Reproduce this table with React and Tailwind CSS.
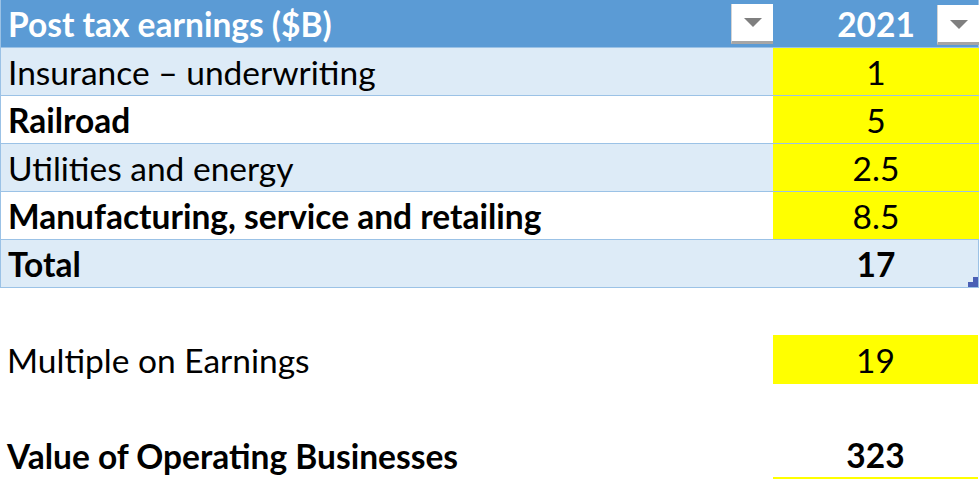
const rows = [
  { label: 'Insurance – underwriting', value: '1', bold: false, shade: true },
  { label: 'Railroad', value: '5', bold: true, shade: false },
  { label: 'Utilities and energy', value: '2.5', bold: false, shade: true },
  { label: 'Manufacturing, service and retailing', value: '8.5', bold: true, shade: false },
];

function FilterButton() {
  return (
    <div className="w-[42px] h-[40px] bg-white border-l border-[#d4d4d4] border-b-[3px] border-b-[#a6a6a6] flex items-center justify-center">
      <svg width="20" height="12" viewBox="0 0 20 12">
        <path d="M1 2h18l-9 9z" fill="#7f7f7f" />
      </svg>
    </div>
  );
}

export default function App() {
  return (
    <div className="w-[980px] h-[482px] bg-white text-black text-[33.5px] leading-none" style={{ fontFamily: 'Lato, "Open Sans", sans-serif' }}>
      <div className="w-[979px] border-l border-r border-b border-[#9bc2e6]">
        {/* header */}
        <div className="grid grid-cols-[772px_206px] h-[48px] bg-[#5b9bd5] text-white font-bold border-b border-[#9bc2e6]">
          <div className="flex items-center justify-between pl-[7px]">
            <span className="pt-[2px]">Post tax earnings ($B)</span>
            <FilterButton />
          </div>
          <div className="relative flex items-center justify-center">
            <span className="pt-[2px]">2021</span>
            <div className="absolute right-0 top-[5px]">
              <FilterButton />
            </div>
          </div>
        </div>

        {rows.map((r) => (
          <div key={r.label} className={`grid grid-cols-[772px_206px] h-[48px] border-b border-[#9bc2e6] ${r.shade ? 'bg-[#ddebf7]' : 'bg-white'} ${r.bold ? 'font-bold' : ''}`}>
            <div className="flex items-center pl-[7px] pt-[3px]">{r.label}</div>
            <div className="flex items-center justify-center bg-[#ffff00] font-normal pt-[3px]">{r.value}</div>
          </div>
        ))}

        {/* total */}
        <div className="relative grid grid-cols-[772px_206px] h-[47px] bg-[#ddebf7] font-bold">
          <div className="flex items-center pl-[7px] pt-[3px]">Total</div>
          <div className="flex items-center justify-center pt-[3px]">17</div>
          <svg className="absolute right-0 bottom-0" width="10" height="10" viewBox="0 0 10 10">
            <path d="M5 0h5v10H0V5h5z" fill="#4a5fb5" />
          </svg>
        </div>
      </div>

      <div className="h-[47px]" />
      <div className="grid grid-cols-[773px_205px] h-[49px]">
        <div className="flex items-center pl-[7px] pt-[3px]">Multiple on Earnings</div>
        <div className="flex items-center justify-center bg-[#ffff00] pt-[3px]">19</div>
      </div>
      <div className="h-[47px]" />
      <div className="grid grid-cols-[773px_205px] h-[48px] font-bold">
        <div className="flex items-center pl-[7px] pt-[3px]">Value of Operating Businesses</div>
        <div className="flex items-center justify-center border-b-2 border-[#ffff00] pt-[3px]">323</div>
      </div>
    </div>
  );
}
